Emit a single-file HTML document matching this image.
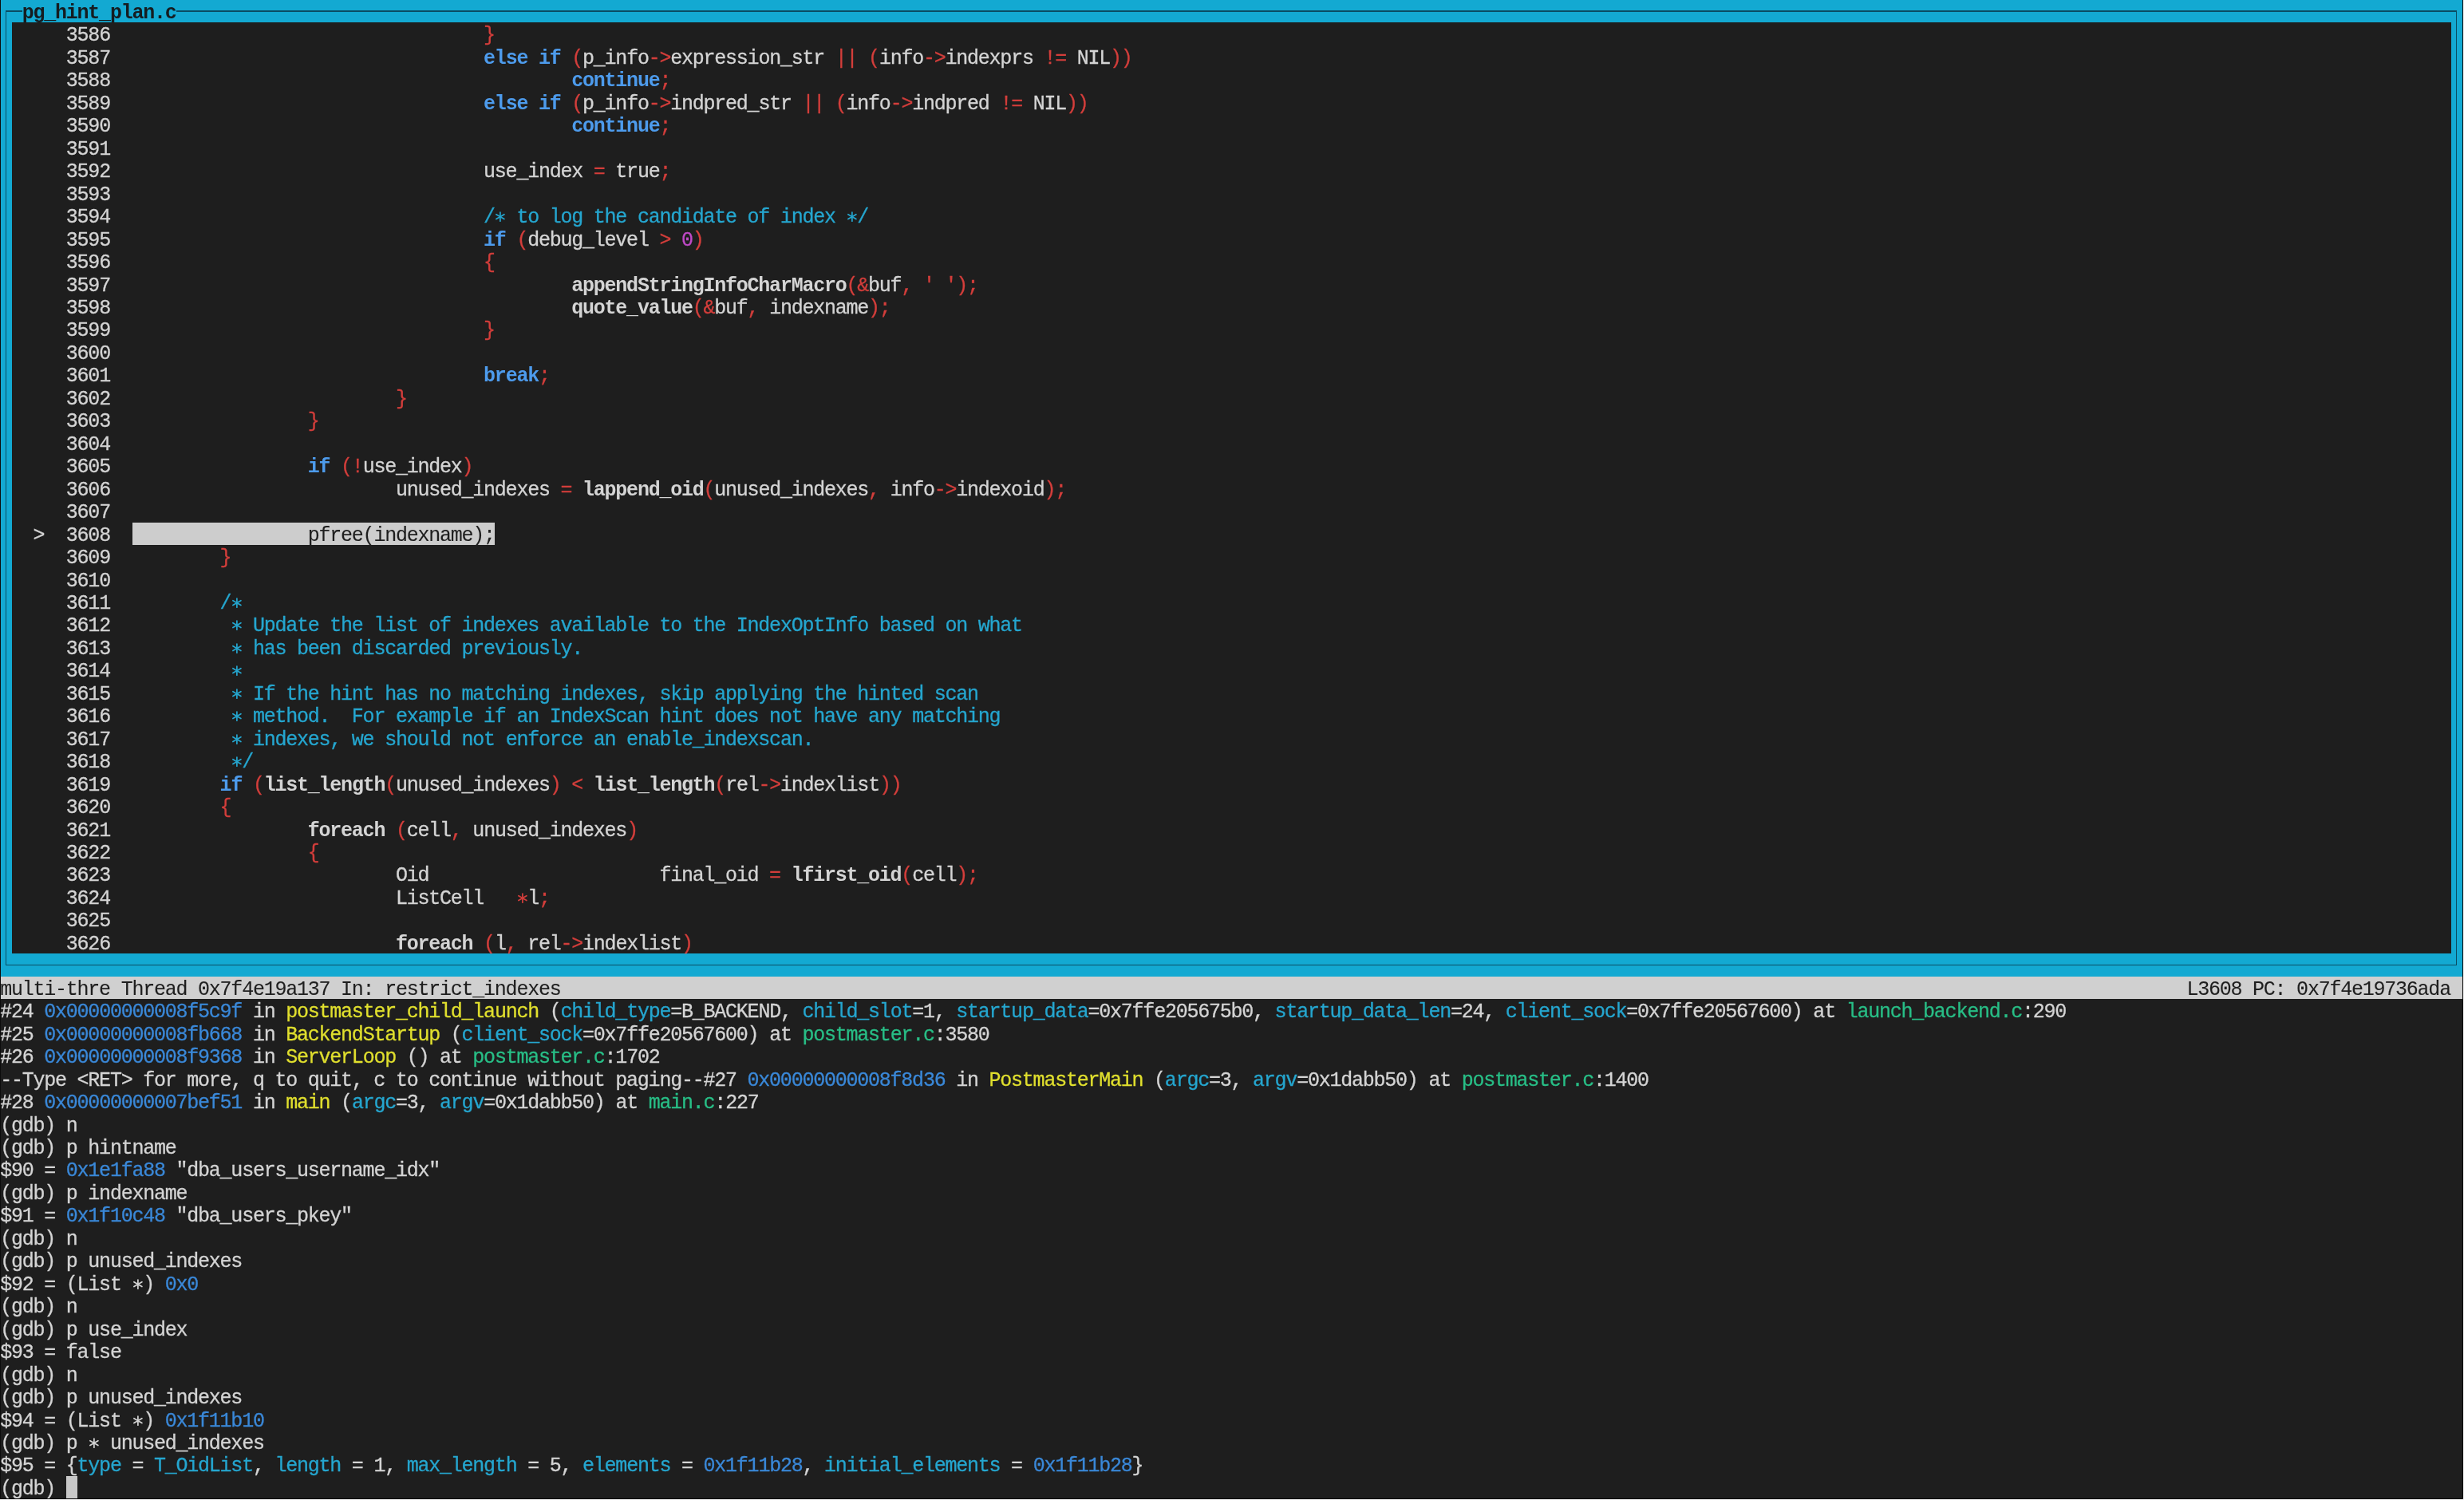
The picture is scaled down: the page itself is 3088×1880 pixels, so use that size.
<!DOCTYPE html>
<html><head><meta charset="utf-8"><style>
html,body{margin:0;padding:0}
body{width:3088px;height:1880px;background:#1e1e1e;position:relative;overflow:hidden;font-family:"Liberation Mono",monospace;font-size:25.0px;letter-spacing:-1.2324px;color:#d4d4d4}
.r{position:absolute;white-space:pre;line-height:28.46px;height:28.46px;font-weight:normal;-webkit-text-stroke:0.3px currentColor}
#t{position:absolute;left:0;top:0;width:3088px;height:1880px;will-change:transform}
b{font-weight:normal}
.k{color:#4d9bec;font-weight:bold;-webkit-text-stroke:0}
.p{color:#d33e3b}
.f{font-weight:bold;-webkit-text-stroke:0}
.c{color:#25a6cf}
.n{color:#c04ac8}
.y{color:#e0df2e}
.g{color:#28be86}
.a{color:#3a88d8}
.hl{color:#1e1e1e;-webkit-text-stroke:0.1px}
.bx{position:absolute}
</style></head><body>

<div class="bx" style="left:1px;top:0;width:3085.5px;height:1223.78px;background:#13a9d2"></div>
<div class="bx" style="left:14.57px;top:28.46px;width:3056.94px;height:1166.86px;background:#1e1e1e"></div>
<div class="bx" style="left:7.00px;top:13.23px;width:3072.41px;height:1.4px;background:#0a4d63"></div>
<div class="bx" style="left:7.00px;top:1208.55px;width:3072.41px;height:1.4px;background:#0a4d63"></div>
<div class="bx" style="left:7.00px;top:13.23px;width:1.4px;height:1196.72px;background:#0a4d63"></div>
<div class="bx" style="left:3078.01px;top:13.23px;width:1.4px;height:1196.72px;background:#0a4d63"></div>
<div class="bx" style="left:28.34px;top:0;width:192.78px;height:28.46px;background:#13a9d2"></div>
<div class="bx" style="left:1px;top:1223.78px;width:3085.5px;height:28.46px;background:#d0d0d0"></div>
<div class="bx" style="left:166.04px;top:654.58px;width:454.41px;height:28.46px;background:#cdcdcd"></div>
<div id="t">
<div class="r" style="left:27.74px;top:3.00px;color:#151c20;font-weight:bold;-webkit-text-stroke:0">pg_hint_plan.c</div>
<div class="r" style="left:0.20px;top:1226.78px;color:#1e1e1e;-webkit-text-stroke:0.1px">multi-thre Thread 0x7f4e19a137 In: restrict_indexes</div>
<div class="r" style="left:2740.43px;top:1226.78px;color:#1e1e1e;-webkit-text-stroke:0.1px">L3608 PC: 0x7f4e19736ada</div>
<div class="r" style="left:13.97px;top:31.46px">     3586  <b class="p">                                }</b></div>
<div class="r" style="left:13.97px;top:59.92px">     3587  <b class="k">                                else if </b><b class="p">(</b>p_info<b class="p">-&gt;</b>expression_str <b class="p">|| (</b>info<b class="p">-&gt;</b>indexprs <b class="p">!= </b>NIL<b class="p">))</b></div>
<div class="r" style="left:13.97px;top:88.38px">     3588  <b class="k">                                        continue</b><b class="p">;</b></div>
<div class="r" style="left:13.97px;top:116.84px">     3589  <b class="k">                                else if </b><b class="p">(</b>p_info<b class="p">-&gt;</b>indpred_str <b class="p">|| (</b>info<b class="p">-&gt;</b>indpred <b class="p">!= </b>NIL<b class="p">))</b></div>
<div class="r" style="left:13.97px;top:145.30px">     3590  <b class="k">                                        continue</b><b class="p">;</b></div>
<div class="r" style="left:13.97px;top:173.76px">     3591  </div>
<div class="r" style="left:13.97px;top:202.22px">     3592                                  use_index <b class="p">= </b>true<b class="p">;</b></div>
<div class="r" style="left:13.97px;top:230.68px">     3593  </div>
<div class="r" style="left:13.97px;top:259.14px">     3594  <b class="c">                                /  to log the candidate of index  /</b></div>
<div class="r" style="left:13.97px;top:287.60px">     3595  <b class="k">                                if </b><b class="p">(</b>debug_level <b class="p">&gt; </b><b class="n">0</b><b class="p">)</b></div>
<div class="r" style="left:13.97px;top:316.06px">     3596  <b class="p">                                {</b></div>
<div class="r" style="left:13.97px;top:344.52px">     3597  <b class="f">                                        appendStringInfoCharMacro</b><b class="p">(&amp;</b>buf<b class="p">, &#x27; &#x27;);</b></div>
<div class="r" style="left:13.97px;top:372.98px">     3598  <b class="f">                                        quote_value</b><b class="p">(&amp;</b>buf<b class="p">, </b>indexname<b class="p">);</b></div>
<div class="r" style="left:13.97px;top:401.44px">     3599  <b class="p">                                }</b></div>
<div class="r" style="left:13.97px;top:429.90px">     3600  </div>
<div class="r" style="left:13.97px;top:458.36px">     3601  <b class="k">                                break</b><b class="p">;</b></div>
<div class="r" style="left:13.97px;top:486.82px">     3602  <b class="p">                        }</b></div>
<div class="r" style="left:13.97px;top:515.28px">     3603  <b class="p">                }</b></div>
<div class="r" style="left:13.97px;top:543.74px">     3604  </div>
<div class="r" style="left:13.97px;top:572.20px">     3605  <b class="k">                if </b><b class="p">(!</b>use_index<b class="p">)</b></div>
<div class="r" style="left:13.97px;top:600.66px">     3606                          unused_indexes <b class="p">= </b><b class="f">lappend_oid</b><b class="p">(</b>unused_indexes<b class="p">, </b>info<b class="p">-&gt;</b>indexoid<b class="p">);</b></div>
<div class="r" style="left:13.97px;top:629.12px">     3607  </div>
<div class="r" style="left:13.97px;top:657.58px">  &gt;  3608  <b class="hl">                pfree(indexname);</b></div>
<div class="r" style="left:13.97px;top:686.04px">     3609  <b class="p">        }</b></div>
<div class="r" style="left:13.97px;top:714.50px">     3610  </div>
<div class="r" style="left:13.97px;top:742.96px">     3611  <b class="c">        / </b></div>
<div class="r" style="left:13.97px;top:771.42px">     3612  <b class="c">           Update the list of indexes available to the IndexOptInfo based on what</b></div>
<div class="r" style="left:13.97px;top:799.88px">     3613  <b class="c">           has been discarded previously.</b></div>
<div class="r" style="left:13.97px;top:828.34px">     3614  <b class="c">          </b></div>
<div class="r" style="left:13.97px;top:856.80px">     3615  <b class="c">           If the hint has no matching indexes, skip applying the hinted scan</b></div>
<div class="r" style="left:13.97px;top:885.26px">     3616  <b class="c">           method.  For example if an IndexScan hint does not have any matching</b></div>
<div class="r" style="left:13.97px;top:913.72px">     3617  <b class="c">           indexes, we should not enforce an enable_indexscan.</b></div>
<div class="r" style="left:13.97px;top:942.18px">     3618  <b class="c">          /</b></div>
<div class="r" style="left:13.97px;top:970.64px">     3619  <b class="k">        if </b><b class="p">(</b><b class="f">list_length</b><b class="p">(</b>unused_indexes<b class="p">) &lt; </b><b class="f">list_length</b><b class="p">(</b>rel<b class="p">-&gt;</b>indexlist<b class="p">))</b></div>
<div class="r" style="left:13.97px;top:999.10px">     3620  <b class="p">        {</b></div>
<div class="r" style="left:13.97px;top:1027.56px">     3621  <b class="f">                foreach </b><b class="p">(</b>cell<b class="p">, </b>unused_indexes<b class="p">)</b></div>
<div class="r" style="left:13.97px;top:1056.02px">     3622  <b class="p">                {</b></div>
<div class="r" style="left:13.97px;top:1084.48px">     3623                          Oid                     final_oid <b class="p">= </b><b class="f">lfirst_oid</b><b class="p">(</b>cell<b class="p">);</b></div>
<div class="r" style="left:13.97px;top:1112.94px">     3624                          ListCell   <b class="p"> </b>l<b class="p">;</b></div>
<div class="r" style="left:13.97px;top:1141.40px">     3625  </div>
<div class="r" style="left:13.97px;top:1169.86px">     3626  <b class="f">                        foreach </b><b class="p">(</b>l<b class="p">, </b>rel<b class="p">-&gt;</b>indexlist<b class="p">)</b></div>
<div class="r" style="left:0.20px;top:1255.24px">#24 <b class="a">0x00000000008f5c9f</b> in <b class="y">postmaster_child_launch</b> (<b class="c">child_type</b>=B_BACKEND, <b class="c">child_slot</b>=1, <b class="c">startup_data</b>=0x7ffe205675b0, <b class="c">startup_data_len</b>=24, <b class="c">client_sock</b>=0x7ffe20567600) at <b class="g">launch_backend.c</b>:290</div>
<div class="r" style="left:0.20px;top:1283.70px">#25 <b class="a">0x00000000008fb668</b> in <b class="y">BackendStartup</b> (<b class="c">client_sock</b>=0x7ffe20567600) at <b class="g">postmaster.c</b>:3580</div>
<div class="r" style="left:0.20px;top:1312.16px">#26 <b class="a">0x00000000008f9368</b> in <b class="y">ServerLoop</b> () at <b class="g">postmaster.c</b>:1702</div>
<div class="r" style="left:0.20px;top:1340.62px">--Type &lt;RET&gt; for more, q to quit, c to continue without paging--#27 <b class="a">0x00000000008f8d36</b> in <b class="y">PostmasterMain</b> (<b class="c">argc</b>=3, <b class="c">argv</b>=0x1dabb50) at <b class="g">postmaster.c</b>:1400</div>
<div class="r" style="left:0.20px;top:1369.08px">#28 <b class="a">0x00000000007bef51</b> in <b class="y">main</b> (<b class="c">argc</b>=3, <b class="c">argv</b>=0x1dabb50) at <b class="g">main.c</b>:227</div>
<div class="r" style="left:0.20px;top:1397.54px">(gdb) n</div>
<div class="r" style="left:0.20px;top:1426.00px">(gdb) p hintname</div>
<div class="r" style="left:0.20px;top:1454.46px">$90 = <b class="a">0x1e1fa88</b> &quot;dba_users_username_idx&quot;</div>
<div class="r" style="left:0.20px;top:1482.92px">(gdb) p indexname</div>
<div class="r" style="left:0.20px;top:1511.38px">$91 = <b class="a">0x1f10c48</b> &quot;dba_users_pkey&quot;</div>
<div class="r" style="left:0.20px;top:1539.84px">(gdb) n</div>
<div class="r" style="left:0.20px;top:1568.30px">(gdb) p unused_indexes</div>
<div class="r" style="left:0.20px;top:1596.76px">$92 = (List  ) <b class="a">0x0</b></div>
<div class="r" style="left:0.20px;top:1625.22px">(gdb) n</div>
<div class="r" style="left:0.20px;top:1653.68px">(gdb) p use_index</div>
<div class="r" style="left:0.20px;top:1682.14px">$93 = false</div>
<div class="r" style="left:0.20px;top:1710.60px">(gdb) n</div>
<div class="r" style="left:0.20px;top:1739.06px">(gdb) p unused_indexes</div>
<div class="r" style="left:0.20px;top:1767.52px">$94 = (List  ) <b class="a">0x1f11b10</b></div>
<div class="r" style="left:0.20px;top:1795.98px">(gdb) p   unused_indexes</div>
<div class="r" style="left:0.20px;top:1824.44px">$95 = {<b class="c">type</b> = <b class="c">T_OidList</b>, <b class="c">length</b> = 1, <b class="c">max_length</b> = 5, <b class="c">elements</b> = <b class="a">0x1f11b28</b>, <b class="c">initial_elements</b> = <b class="a">0x1f11b28</b>}</div>
<div class="r" style="left:0.20px;top:1852.90px">(gdb) </div>
</div>
<svg class="bx" style="left:620.45px;top:256.14px" width="14" height="29" viewBox="0 0 14 29"><g stroke="#25a6cf" stroke-width="1.7" stroke-linecap="round"><line x1="6.9" y1="10.0" x2="6.9" y2="21.2"/><line x1="1.9000000000000004" y1="12.7" x2="11.9" y2="18.5"/><line x1="1.9000000000000004" y1="18.5" x2="11.9" y2="12.7"/></g></svg>
<svg class="bx" style="left:1061.09px;top:256.14px" width="14" height="29" viewBox="0 0 14 29"><g stroke="#25a6cf" stroke-width="1.7" stroke-linecap="round"><line x1="6.9" y1="10.0" x2="6.9" y2="21.2"/><line x1="1.9000000000000004" y1="12.7" x2="11.9" y2="18.5"/><line x1="1.9000000000000004" y1="18.5" x2="11.9" y2="12.7"/></g></svg>
<svg class="bx" style="left:289.97px;top:739.96px" width="14" height="29" viewBox="0 0 14 29"><g stroke="#25a6cf" stroke-width="1.7" stroke-linecap="round"><line x1="6.9" y1="10.0" x2="6.9" y2="21.2"/><line x1="1.9000000000000004" y1="12.7" x2="11.9" y2="18.5"/><line x1="1.9000000000000004" y1="18.5" x2="11.9" y2="12.7"/></g></svg>
<svg class="bx" style="left:289.97px;top:768.42px" width="14" height="29" viewBox="0 0 14 29"><g stroke="#25a6cf" stroke-width="1.7" stroke-linecap="round"><line x1="6.9" y1="10.0" x2="6.9" y2="21.2"/><line x1="1.9000000000000004" y1="12.7" x2="11.9" y2="18.5"/><line x1="1.9000000000000004" y1="18.5" x2="11.9" y2="12.7"/></g></svg>
<svg class="bx" style="left:289.97px;top:796.88px" width="14" height="29" viewBox="0 0 14 29"><g stroke="#25a6cf" stroke-width="1.7" stroke-linecap="round"><line x1="6.9" y1="10.0" x2="6.9" y2="21.2"/><line x1="1.9000000000000004" y1="12.7" x2="11.9" y2="18.5"/><line x1="1.9000000000000004" y1="18.5" x2="11.9" y2="12.7"/></g></svg>
<svg class="bx" style="left:289.97px;top:825.34px" width="14" height="29" viewBox="0 0 14 29"><g stroke="#25a6cf" stroke-width="1.7" stroke-linecap="round"><line x1="6.9" y1="10.0" x2="6.9" y2="21.2"/><line x1="1.9000000000000004" y1="12.7" x2="11.9" y2="18.5"/><line x1="1.9000000000000004" y1="18.5" x2="11.9" y2="12.7"/></g></svg>
<svg class="bx" style="left:289.97px;top:853.80px" width="14" height="29" viewBox="0 0 14 29"><g stroke="#25a6cf" stroke-width="1.7" stroke-linecap="round"><line x1="6.9" y1="10.0" x2="6.9" y2="21.2"/><line x1="1.9000000000000004" y1="12.7" x2="11.9" y2="18.5"/><line x1="1.9000000000000004" y1="18.5" x2="11.9" y2="12.7"/></g></svg>
<svg class="bx" style="left:289.97px;top:882.26px" width="14" height="29" viewBox="0 0 14 29"><g stroke="#25a6cf" stroke-width="1.7" stroke-linecap="round"><line x1="6.9" y1="10.0" x2="6.9" y2="21.2"/><line x1="1.9000000000000004" y1="12.7" x2="11.9" y2="18.5"/><line x1="1.9000000000000004" y1="18.5" x2="11.9" y2="12.7"/></g></svg>
<svg class="bx" style="left:289.97px;top:910.72px" width="14" height="29" viewBox="0 0 14 29"><g stroke="#25a6cf" stroke-width="1.7" stroke-linecap="round"><line x1="6.9" y1="10.0" x2="6.9" y2="21.2"/><line x1="1.9000000000000004" y1="12.7" x2="11.9" y2="18.5"/><line x1="1.9000000000000004" y1="18.5" x2="11.9" y2="12.7"/></g></svg>
<svg class="bx" style="left:289.97px;top:939.18px" width="14" height="29" viewBox="0 0 14 29"><g stroke="#25a6cf" stroke-width="1.7" stroke-linecap="round"><line x1="6.9" y1="10.0" x2="6.9" y2="21.2"/><line x1="1.9000000000000004" y1="12.7" x2="11.9" y2="18.5"/><line x1="1.9000000000000004" y1="18.5" x2="11.9" y2="12.7"/></g></svg>
<svg class="bx" style="left:647.99px;top:1109.94px" width="14" height="29" viewBox="0 0 14 29"><g stroke="#d33e3b" stroke-width="1.7" stroke-linecap="round"><line x1="6.9" y1="10.0" x2="6.9" y2="21.2"/><line x1="1.9000000000000004" y1="12.7" x2="11.9" y2="18.5"/><line x1="1.9000000000000004" y1="18.5" x2="11.9" y2="12.7"/></g></svg>
<svg class="bx" style="left:166.04px;top:1593.76px" width="14" height="29" viewBox="0 0 14 29"><g stroke="#d4d4d4" stroke-width="1.7" stroke-linecap="round"><line x1="6.9" y1="10.0" x2="6.9" y2="21.2"/><line x1="1.9000000000000004" y1="12.7" x2="11.9" y2="18.5"/><line x1="1.9000000000000004" y1="18.5" x2="11.9" y2="12.7"/></g></svg>
<svg class="bx" style="left:166.04px;top:1764.52px" width="14" height="29" viewBox="0 0 14 29"><g stroke="#d4d4d4" stroke-width="1.7" stroke-linecap="round"><line x1="6.9" y1="10.0" x2="6.9" y2="21.2"/><line x1="1.9000000000000004" y1="12.7" x2="11.9" y2="18.5"/><line x1="1.9000000000000004" y1="18.5" x2="11.9" y2="12.7"/></g></svg>
<svg class="bx" style="left:110.96px;top:1792.98px" width="14" height="29" viewBox="0 0 14 29"><g stroke="#d4d4d4" stroke-width="1.7" stroke-linecap="round"><line x1="6.9" y1="10.0" x2="6.9" y2="21.2"/><line x1="1.9000000000000004" y1="12.7" x2="11.9" y2="18.5"/><line x1="1.9000000000000004" y1="18.5" x2="11.9" y2="12.7"/></g></svg>
<div class="bx" style="left:83.42px;top:1849.90px;width:13.77px;height:28.46px;background:#c8c8c8"></div>
<div class="bx" style="left:0;top:0;width:1px;height:1880px;background:rgba(0,0,0,0.6)"></div>
<div class="bx" style="left:3086px;top:0;width:1px;height:1879px;background:#0a0a0a"></div>
<div class="bx" style="left:3087px;top:0;width:1px;height:1880px;background:#f0f0f0"></div>
<div class="bx" style="left:0;top:1878px;width:3087px;height:1px;background:#0a0a0a"></div>
<div class="bx" style="left:0;top:1879px;width:3088px;height:1px;background:#f0f0f0"></div>
</body></html>
